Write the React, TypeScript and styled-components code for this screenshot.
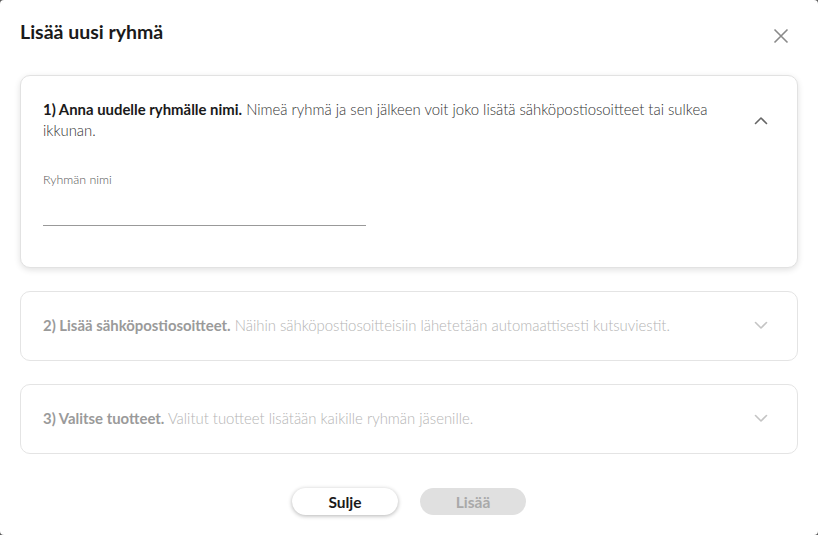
import React from 'react';
import styled, { createGlobalStyle } from 'styled-components';

const steps = [
  {
    title: '1) Anna uudelle ryhmälle nimi.',
    text: 'Nimeä ryhmä ja sen jälkeen voit joko lisätä sähköpostiosoitteet tai sulkea ikkunan.',
    open: true,
  },
  {
    title: '2) Lisää sähköpostiosoitteet.',
    text: 'Näihin sähköpostiosoitteisiin lähetetään automaattisesti kutsuviestit.',
    open: false,
  },
  {
    title: '3) Valitse tuotteet.',
    text: 'Valitut tuotteet lisätään kaikille ryhmän jäsenille.',
    open: false,
  },
];

const Chevron: React.FC<{ up: boolean }> = ({ up }) => (
  <svg width="14" height="9" viewBox="0 0 14 9" fill="none">
    <path
      d={up ? 'M1.5 7.5 L7 2 L12.5 7.5' : 'M1.5 1.5 L7 7 L12.5 1.5'}
      stroke="currentColor"
      strokeWidth="1.6"
      strokeLinecap="round"
      strokeLinejoin="round"
    />
  </svg>
);

const App: React.FC = () => {
  return (
    <>
      <GlobalStyle />
      <Modal>
        <Header>
          <Title>Lisää uusi ryhmä</Title>
          <CloseButton aria-label="Sulje">
            <svg width="16" height="16" viewBox="0 0 16 16">
              <path d="M1.5 1.5 L14.5 14.5 M14.5 1.5 L1.5 14.5" stroke="currentColor" strokeWidth="1.6" />
            </svg>
          </CloseButton>
        </Header>

        <Steps>
          {steps.map((s) => (
            <Card key={s.title} $open={s.open}>
              <CardHead>
                <StepText $open={s.open}>
                  <b>{s.title}</b>
                  <span> {s.text}</span>
                </StepText>
                <Toggle $open={s.open}>
                  <Chevron up={s.open} />
                </Toggle>
              </CardHead>
              {s.open && (
                <Field>
                  <Label>Ryhmän nimi</Label>
                  <Input />
                </Field>
              )}
            </Card>
          ))}
        </Steps>

        <Actions>
          <Button>Sulje</Button>
          <Button $disabled disabled>Lisää</Button>
        </Actions>
      </Modal>
    </>
  );
};

const GlobalStyle = createGlobalStyle`
  html, body {
    margin: 0;
    padding: 0;
    background: #5a5a5a;
  }
  body {
    font-family: Lato, "Noto Sans", sans-serif;
  }
`;

const Modal = styled.div`
  box-sizing: border-box;
  width: 818px;
  height: 535px;
  background: #fff;
  border-radius: 4px;
  padding: 20px 20px 0 20px;
  display: flex;
  flex-direction: column;
`;

const Header = styled.div`
  display: flex;
  justify-content: space-between;
  align-items: flex-start;
  height: 55px;
`;

const Title = styled.h2`
  margin: 0;
  font-size: 19.5px;
  line-height: 24px;
  font-weight: 700;
  color: #1a1a1a;
`;

const CloseButton = styled.button`
  border: none;
  background: none;
  padding: 0;
  margin: 8px 9px 0 0;
  color: #8a8a8a;
  cursor: pointer;
  display: flex;
`;

const Steps = styled.div`
  display: flex;
  flex-direction: column;
  gap: 23px;
`;

const Card = styled.div<{ $open: boolean }>`
  border: 1px solid ${(p) => (p.$open ? '#e2e2e2' : '#e4e4e4')};
  border-radius: 10px;
  padding: 23px 22px ${(p) => (p.$open ? '41px' : '24px')} 22px;
  box-shadow: ${(p) => (p.$open ? '0 2px 6px rgba(0, 0, 0, 0.12)' : 'none')};
  background: #fff;
`;

const CardHead = styled.div`
  display: flex;
  align-items: center;
  justify-content: space-between;
  gap: 40px;
`;

const StepText = styled.p<{ $open: boolean }>`
  margin: 0;
  font-size: 14.9px;
  line-height: 21px;
  font-weight: 300;
  color: ${(p) => (p.$open ? '#333' : '#b4b4b4')};
  b {
    font-weight: 700;
    color: ${(p) => (p.$open ? '#1a1a1a' : '#9a9a9a')};
  }
`;

const Toggle = styled.span<{ $open: boolean }>`
  display: flex;
  margin-right: 7px;
  color: ${(p) => (p.$open ? '#666' : '#c4c4c4')};
`;

const Field = styled.div`
  display: flex;
  flex-direction: column;
  margin-top: 32px;
  width: 323px;
`;

const Label = styled.label`
  font-size: 12.4px;
  line-height: 14px;
  font-weight: 300;
  color: #555;
`;

const Input = styled.input`
  border: none;
  border-bottom: 1px solid #999;
  outline: none;
  height: 38px;
  padding: 0;
  font-family: inherit;
  font-size: 14px;
`;

const Actions = styled.div`
  display: flex;
  justify-content: center;
  gap: 22px;
  margin-top: 34px;
`;

const Button = styled.button<{ $disabled?: boolean }>`
  width: 106px;
  height: 27px;
  border-radius: 14px;
  border: none;
  font-family: inherit;
  font-size: 15.5px;
  font-weight: 700;
  background: ${(p) => (p.$disabled ? '#e0e0e0' : '#fff')};
  color: ${(p) => (p.$disabled ? '#a9a9a9' : '#1a1a1a')};
  box-shadow: ${(p) => (p.$disabled ? 'none' : '0 1px 4px rgba(0, 0, 0, 0.3)')};
  cursor: ${(p) => (p.$disabled ? 'default' : 'pointer')};
`;

export default App;
